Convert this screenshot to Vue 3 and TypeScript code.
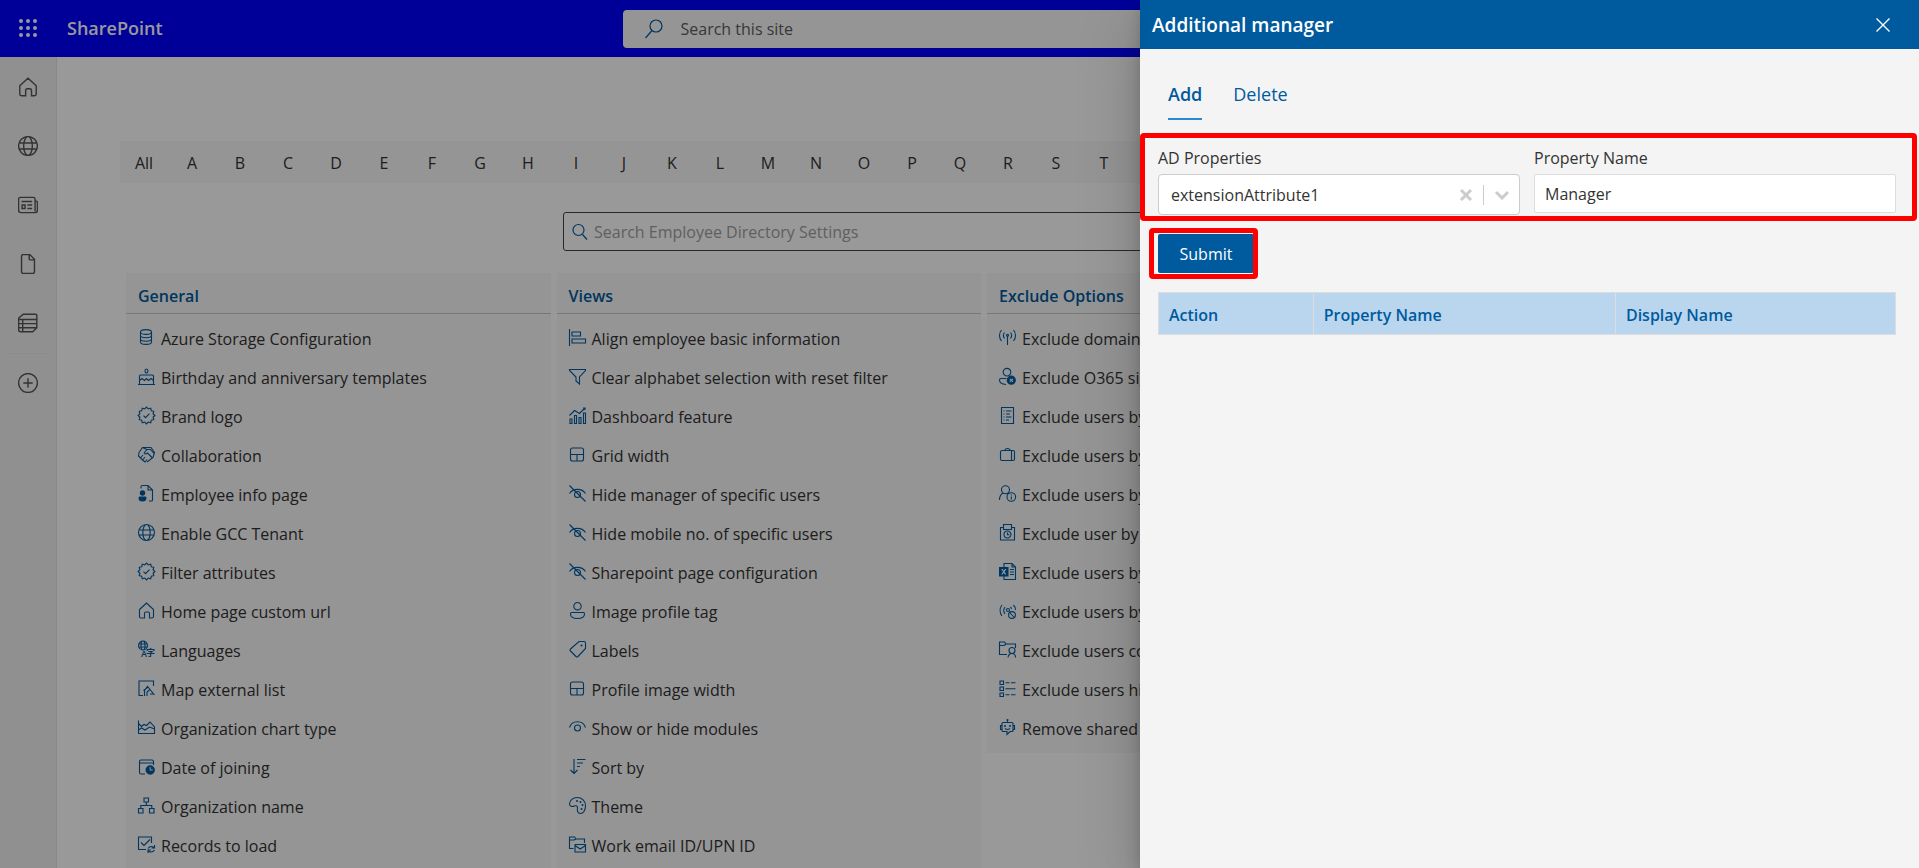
<script setup lang="ts">
import { ref } from 'vue'

interface Glyph {
  x: number
  y: number
  size: number
  text: string
}

interface Icon {
  stroke?: string
  fill?: string
  glyphs?: Glyph[]
}

interface Item {
  label: string
  icon: string
}

interface Section {
  title: string
  items: Item[]
}

/** Closed ellipse as path data. */
const oval = (x: number, y: number, rx: number, ry: number = rx): string =>
  `M${x - rx} ${y}a${rx} ${ry} 0 1 0 ${rx * 2} 0a${rx} ${ry} 0 1 0 ${-rx * 2} 0z`

/** Seal outline: twelve points with shallow valleys between them. */
const seal = (): string => {
  const points: string[] = []
  for (let i = 0; i < 24; i++) {
    const radius = i % 2 === 0 ? 8.4 : 6.8
    const a = (i / 24) * Math.PI * 2
    points.push(`${(8.5 + radius * Math.cos(a)).toFixed(2)} ${(8.5 + radius * Math.sin(a)).toFixed(2)}`)
  }
  return `M${points.join('L')}z`
}

const globe = oval(8.5, 8.5, 8) + oval(8.5, 8.5, 3.7, 8) + 'M1 6h15M1 11h15'
const home =
  'M1.5 7.5L8.5 1l7 6.5v7q0 1.5-1.5 1.5h-2.5v-4.5q0-1.5-1.5-1.5h-2q-1.5 0-1.5 1.5V16H3q-1.5 0-1.5-1.5z'

const icons: Record<string, Icon> = {
  database: {
    stroke:
      'M2.5 3v10c0 3.2 11 3.2 11 0V3M2.5 3c0-3.2 11-3.2 11 0s-11 3.2-11 0M2.5 6.5c0 3 11 3 11 0M2.5 10c0 3 11 3 11 0',
  },
  cake: {
    stroke:
      'M0 16.5h17M1.5 16.5V8q0-1 1-1h12q1 0 1 1v8.5M1.5 12.5l2.5-2 2.5 2 2-2 2 2 2.500-2 2.500 2' + oval(8.5, 3, 1.5, 2),
  },
  seal: { stroke: seal() + 'M5.5 8.7l2 2 4-4' },
  handshake: {
    stroke:
      'M1 6.5L4.5 1.5H13l3.5 5-1.5 5-6 4.5M6 7l3-3.5h3.5l3.5 4M6 7q1.5 2 3.5 0l5 5M1 6.5L.5 10l2 2L5 9M2.5 12l2 2 2.5-3M4.5 14L7 16l2-2.5M4.5 1.5L9 3.5',
  },
  employeePage: {
    stroke: 'M3 3.5V2Q3 .5 4.5.5H10L14.5 5v10q0 1-1 1H11M10 .5V5h4.5',
    fill: oval(4.5, 8, 2.7) + 'M1.5 11.5h6q1 0 1 1.5 0 3.5-4 3.5t-4-3.5q0-1.5 1-1.5z',
  },
  globe: { stroke: globe },
  home: { stroke: home },
  language: {
    stroke: oval(5, 4.5, 4.5) + oval(5, 4.5, 2, 4.5) + 'M.8 3h8.4M.8 6h8.4',
    glyphs: [
      { x: 3, y: 16, size: 9, text: 'A' },
      { x: 8, y: 15, size: 9, text: '字' },
    ],
  },
  map: { stroke: 'M15.5 6V1H1v14.5h4M6.5 16v-5.5l3-4 7 8.5M9 16v-4l2.5-2M12 14h4M5.5 10.5l4-3' },
  areaChart: { stroke: 'M.5 1.5v13h16V8L12 3 8.5 6.5l-2.5-1-2.5 2-3-3M.5 11l3-2L7 11l4.500-3 5 2' },
  dateClock: {
    stroke: 'M1.5 5h14V3.5Q15.5 2 14 2H3Q1.5 2 1.5 3.5v11Q1.5 16 3 16h4M15.5 5v2',
    fill: oval(12.2, 12, 4.7) + 'M11.7 9v3.5h3v-1h-2V9z',
  },
  orgChart: { stroke: 'M6 1h4.5v4H6zM.5 11.5H5V16H.5zM11.5 11.5H16V16h-4.5zM8.3 5v3.5M2.8 11.5v-3h11v3' },
  records: {
    stroke: 'M13.5 7V1H.5v12.5H8M3 6.5l3 3 6-6M10 12.5q2.5-3.5 6-1M16.5 9v3h-3M16.5 14q-2.5 3.5-6 1M10 17v-3h3',
  },
  alignLeft: { stroke: 'M.5 0v17M3 3h8.5v4H3zM3 10h13.5v4H3z' },
  funnel: { stroke: 'M.5 1.5h16v1L10.5 9v7L7 13V9L.5 2.5z' },
  dashboard: {
    stroke: 'M1 12h2v4.5H1zM5.5 8.500h2v8h-2zM10 10.5h2v6h-2zM14.5 6h2v10.5h-2zM.5 8.500l5-5 5 3L16 1M14 1h2v2',
  },
  layout: { stroke: 'M3.5 2h9q2 0 2 2v9q0 2-2 2h-9q-2 0-2-2V4q0-2 2-2zM1.5 8.500h13M8 8.500V15' },
  eyeOff: { stroke: 'M.5 8.500C4 3 13 3 16.5 8.500M.5.5l16 16' + oval(8.5, 9.5, 3) },
  person: { stroke: oval(8.5, 4.2, 3.7) + 'M2.5 10.5h12q1 0 1 1.5 0 4.5-7 4.5t-7-4.5q0-1.5 1-1.5z' },
  tag: { stroke: 'M10 .5h5q1.5 0 1.5 1.5v5.5L9 15.5q-1 1-2 0L1.5 10q-1-1 0-2z', fill: oval(12.5, 4.5, 1) },
  eye: { stroke: 'M.5 8.500C3 .8 14 .8 16.5 8.500' + oval(8.5, 9, 3) },
  sort: { stroke: 'M5 1v14.5M1.5 12L5 15.5 8.5 12M8 1.5h8.5M8 5h6M8 8.500h3' },
  palette: {
    stroke: 'M8 .5c5 0 8.500 3.500 8.500 8 0 4.500-2 8-5 8s-3.500-3-3-5.500c.3-2-1.500-2.500-3-2-2.500 1-5 .5-5-2C.5 3.5 4 .5 8 .5z',
    fill: oval(8, 4, 1) + oval(11.5, 5, 1) + oval(13.5, 8, 1) + oval(12.5, 12, 1),
  },
  folderMail: { stroke: 'M4.5 12.5h-4V1h5L7 3h8.5v4M.5 4H5l2-1M6 8.500h10.5V16H6zM6 9.5l5.200 3.500 5.300-3.500' },
  antenna: {
    stroke:
      'M8.5 7v9M5.5 9.5a5 5 0 0 1 0-6M11.5 3.5a5 5 0 0 1 0 6M2.5 12a8.500 8.500 0 0 1 0-11M14.5 1a8.500 8.500 0 0 1 0 11' +
      oval(8.5, 6.2, 1),
  },
  personRemove: {
    stroke: oval(8, 4.2, 3.8) + 'M7.5 10.5H2q-1.5 0-1.5 1.5 0 4 6.5 4.5',
    fill:
      oval(12.3, 12.2, 4.6) +
      'M10.500 11.200l.8-.8 1.100 1.100 1.100-1.100.8.8-1.100 1.100 1.100 1.100-.8.8-1.100-1.100-1.100 1.100-.8-.8 1.100-1.100z',
  },
  document: { stroke: 'M2.5.5h12v16h-12zM4.5 4h1M7 4h5.5M4.5 7h1M7 7h4M4.5 10h1M7 10h5.5M4.5 13h1M7 13h3' },
  briefcase: {
    stroke:
      'M3 4.5h11q1.5 0 1.5 1.5v7q0 1.5-1.5 1.5H3q-1.5 0-1.5-1.5V6q0-1.5 1.5-1.5zM6 4.5q0-2 2.500-2t2.500 2M12.5 4.5v10',
  },
  personInfo: { stroke: oval(6.5, 4.7, 4) + oval(12.3, 12, 4.3) + 'M.5 15q0-5 3.500-7M12.3 11.5v3M12.3 9.5v1' },
  badgeClock: { stroke: 'M4.5 3.5h-3V16h14V3.5h-3M4.5.5h8v5h-8z' + oval(8.5, 10.5, 3.5) + 'M8.5 8.500v2.300h2' },
  spreadsheet: {
    stroke: 'M5 4V.5h8L16.5 4v12.5H5V13M13 .5V4h3.5M11 6.5h4M11 9h4M11 11.5h4',
    fill: 'M0 4h9.5v9.5H0zM2.200 6l1.800 2.700-1.800 2.800h1.500l1.100-1.800 1.100 1.800h1.500L5.600 8.700 7.400 6H5.900L4.800 7.700 3.700 6z',
  },
  signalBlocked: {
    stroke:
      'M3 14a9 9 0 0 1 0-11M6 12a6 6 0 0 1 0-7M11.5 5q1 1 1 2M14.5 3q2 2 2 5M10.7 10.5l4.500 5' +
      oval(9, 8, 1.5) +
      oval(13, 13, 3.4),
  },
  folderPerson: { stroke: 'M8 13.5H.5V1h5L7 3h9.5v4M.5 4.5H5L7 3M9 16.5q.5-4 4-4t3.500 4' + oval(13, 9.5, 3) },
  checklist: {
    stroke:
      'M1 1h3.500v3.500H1zM1 7h3.500v3.500H1zM1 13h3.500v3.500H1zM6.5 2.700h4M12 2.700h4.500M6.5 8.700h10M6.5 14.700h4M12 14.700h4.500',
  },
  robot: {
    stroke:
      'M4 3.5h9q1 0 1 1v7q0 1-1 1h-2l-3 3v-3H4q-1 0-1-1v-7q0-1 1-1zM8.5 3.5V.5M3 6.5H1.5v4H3M14 6.5h1.500v4H14M6 9.5q2.500 2 5 0',
    fill: oval(6, 7, 1) + oval(11, 7, 1) + oval(8.5, 1, 1),
  },
  news: {
    stroke:
      'M2 2h11q1.5 0 1.5 1.5V14M14.5 5h.5q1.5 0 1.5 1.5V13q0 2-2 2h-12q-2 0-2-2V3.5Q.5 2 2 2M3 5.5h9M8 8.500h4M8 11.5h4M3.5 8.500H6v3H3.500z',
  },
  page: { stroke: 'M4.5.5H10l4 4V15q0 1.5-1.5 1.5h-8Q3 16.5 3 15V2Q3 .5 4.5.5M9.5.5V4q0 1 1 1H14' },
  lists: { stroke: 'M4.5 1H15q1 0 1 1v10.5L12.5 16h-10q-2 0-2-2V4.5zM.5 5.5H16M.5 9H16M.5 12.5H16M4 5.5V16' },
  add: { stroke: oval(8.5, 8.5, 8) + 'M8.5 4.5v8M4.5 8.500h8' },
}

const railLinks: Item[] = [
  { label: 'Home', icon: 'home' },
  { label: 'My sites', icon: 'globe' },
  { label: 'News', icon: 'news' },
  { label: 'Files', icon: 'page' },
  { label: 'Lists', icon: 'lists' },
]

const letters: string[] = ['All', ...'ABCDEFGHIJKLMNOPQRST']

const sections: Section[] = [
  {
    title: 'General',
    items: [
      { label: 'Azure Storage Configuration', icon: 'database' },
      { label: 'Birthday and anniversary templates', icon: 'cake' },
      { label: 'Brand logo', icon: 'seal' },
      { label: 'Collaboration', icon: 'handshake' },
      { label: 'Employee info page', icon: 'employeePage' },
      { label: 'Enable GCC Tenant', icon: 'globe' },
      { label: 'Filter attributes', icon: 'seal' },
      { label: 'Home page custom url', icon: 'home' },
      { label: 'Languages', icon: 'language' },
      { label: 'Map external list', icon: 'map' },
      { label: 'Organization chart type', icon: 'areaChart' },
      { label: 'Date of joining', icon: 'dateClock' },
      { label: 'Organization name', icon: 'orgChart' },
      { label: 'Records to load', icon: 'records' },
    ],
  },
  {
    title: 'Views',
    items: [
      { label: 'Align employee basic information', icon: 'alignLeft' },
      { label: 'Clear alphabet selection with reset filter', icon: 'funnel' },
      { label: 'Dashboard feature', icon: 'dashboard' },
      { label: 'Grid width', icon: 'layout' },
      { label: 'Hide manager of specific users', icon: 'eyeOff' },
      { label: 'Hide mobile no. of specific users', icon: 'eyeOff' },
      { label: 'Sharepoint page configuration', icon: 'eyeOff' },
      { label: 'Image profile tag', icon: 'person' },
      { label: 'Labels', icon: 'tag' },
      { label: 'Profile image width', icon: 'layout' },
      { label: 'Show or hide modules', icon: 'eye' },
      { label: 'Sort by', icon: 'sort' },
      { label: 'Theme', icon: 'palette' },
      { label: 'Work email ID/UPN ID', icon: 'folderMail' },
    ],
  },
  {
    title: 'Exclude Options',
    items: [
      { label: 'Exclude domain', icon: 'antenna' },
      { label: 'Exclude O365 sign', icon: 'personRemove' },
      { label: 'Exclude users by', icon: 'document' },
      { label: 'Exclude users by', icon: 'briefcase' },
      { label: 'Exclude users by', icon: 'personInfo' },
      { label: 'Exclude user by', icon: 'badgeClock' },
      { label: 'Exclude users by', icon: 'spreadsheet' },
      { label: 'Exclude users by', icon: 'signalBlocked' },
      { label: 'Exclude users con', icon: 'folderPerson' },
      { label: 'Exclude users hid', icon: 'checklist' },
      { label: 'Remove shared', icon: 'robot' },
    ],
  },
]

const dots = [0, 1, 2].flatMap((row) => [0, 1, 2].map((col) => ({ x: 2 + col * 7, y: 2 + row * 7 })))

const activeTab = ref<'Add' | 'Delete'>('Add')
const adProperty = ref('extensionAttribute1')
const propertyName = ref('Manager')
</script>

<template>
  <div class="app">
    <header class="suite-bar">
      <div class="brand">
        <button class="waffle" type="button" aria-label="App launcher">
          <svg width="18" height="18" viewBox="0 0 18 18" aria-hidden="true">
            <circle v-for="(dot, i) in dots" :key="i" :cx="dot.x" :cy="dot.y" r="2" />
          </svg>
        </button>
        <a class="brand-name" href="#">SharePoint</a>
      </div>
      <label class="site-search">
        <svg width="18" height="20" viewBox="0 0 18 20" aria-hidden="true">
          <circle cx="11" cy="7" r="6" />
          <path d="M7 11.5L.5 19" />
        </svg>
        <input type="search" placeholder="Search this site" aria-label="Search this site" />
      </label>
    </header>

    <div class="workspace">
      <nav class="rail" aria-label="SharePoint">
        <a v-for="link in railLinks" :key="link.label" class="rail-link" href="#" :aria-label="link.label">
          <svg class="rail-icon" viewBox="0 0 17 17" aria-hidden="true">
            <path :d="icons[link.icon].stroke" />
          </svg>
        </a>
        <button class="rail-link rail-create" type="button" aria-label="Create">
          <svg class="rail-icon" viewBox="0 0 17 17" aria-hidden="true">
            <path :d="icons.add.stroke" />
          </svg>
        </button>
      </nav>

      <main class="content">
        <div class="alphabet">
          <button v-for="letter in letters" :key="letter" class="letter" type="button">{{ letter }}</button>
        </div>

        <label class="settings-search">
          <svg width="16" height="18" viewBox="0 0 16 18" aria-hidden="true">
            <circle cx="6.5" cy="7" r="5.5" />
            <path d="M10.5 11.5L15 16.5" />
          </svg>
          <input
            type="search"
            placeholder="Search Employee Directory Settings"
            aria-label="Search Employee Directory Settings"
          />
        </label>

        <div class="sections">
          <section v-for="section in sections" :key="section.title" class="section">
            <h2 class="section-title">{{ section.title }}</h2>
            <ul class="items">
              <li v-for="(item, i) in section.items" :key="i">
                <a class="item" href="#">
                  <svg class="item-icon" viewBox="0 0 17 17" aria-hidden="true">
                    <path v-if="icons[item.icon].stroke" class="line" :d="icons[item.icon].stroke" />
                    <path v-if="icons[item.icon].fill" class="solid" :d="icons[item.icon].fill" />
                    <text
                      v-for="glyph in icons[item.icon].glyphs ?? []"
                      :key="glyph.text"
                      :x="glyph.x"
                      :y="glyph.y"
                      :font-size="glyph.size"
                    >{{ glyph.text }}</text>
                  </svg>
                  <span>{{ item.label }}</span>
                </a>
              </li>
            </ul>
          </section>
        </div>
      </main>
    </div>

    <div class="overlay">
      <aside class="drawer" role="dialog" aria-labelledby="drawer-title">
        <div class="drawer-head">
          <h1 id="drawer-title">Additional manager</h1>
          <button class="close" type="button" aria-label="Close">
            <svg width="14" height="14" viewBox="0 0 14 14" aria-hidden="true">
              <path d="M.5.5l13 13M13.5.5l-13 13" />
            </svg>
          </button>
        </div>

        <div class="tabs" role="tablist">
          <button
            v-for="tab in (['Add', 'Delete'] as const)"
            :key="tab"
            class="tab"
            :class="{ active: activeTab === tab }"
            type="button"
            role="tab"
            :aria-selected="activeTab === tab"
            @click="activeTab = tab"
          >{{ tab }}</button>
        </div>

        <form class="form" @submit.prevent>
          <div class="fields highlighted">
            <div class="field">
              <label for="ad-property">AD Properties</label>
              <div class="picker">
                <select id="ad-property" v-model="adProperty">
                  <option value="" />
                  <option value="extensionAttribute1">extensionAttribute1</option>
                </select>
                <div class="picker-tools">
                  <button class="clear" type="button" aria-label="Clear" @click="adProperty = ''">
                    <svg width="14" height="14" viewBox="0 0 14 14" aria-hidden="true">
                      <path d="M2 2l10 10M12 2L2 12" />
                    </svg>
                  </button>
                  <svg class="chevron" width="16" height="10" viewBox="0 0 16 10" aria-hidden="true">
                    <path d="M2 2l6 6 6-6" />
                  </svg>
                </div>
              </div>
            </div>
            <div class="field">
              <label for="property-name">Property Name</label>
              <input id="property-name" v-model="propertyName" class="text-box" type="text" />
            </div>
          </div>

          <div class="submit-wrap highlighted">
            <button class="submit" type="submit">Submit</button>
          </div>
        </form>

        <table class="grid">
          <thead>
            <tr>
              <th class="col-action" scope="col">Action</th>
              <th class="col-property" scope="col">Property Name</th>
              <th scope="col">Display Name</th>
            </tr>
          </thead>
        </table>
      </aside>
    </div>
  </div>
</template>

<style>
body {
  margin: 0;
}
</style>

<style scoped>
.app,
.app * {
  box-sizing: border-box;
}

.app {
  position: relative;
  display: flex;
  flex-direction: column;
  height: 100vh;
  overflow: hidden;
  background: #fff;
  color: #333;
  font: 16px/22px 'Segoe UI', 'Open Sans', 'Noto Sans', 'Noto Sans CJK SC', sans-serif;
}

button,
input,
select {
  margin: 0;
  padding: 0;
  border: 0;
  background: none;
  color: inherit;
  font: inherit;
}

a {
  color: inherit;
  text-decoration: none;
}

svg {
  flex: none;
  fill: none;
}

/* Suite bar */
.suite-bar {
  display: grid;
  grid-template-columns: 1fr minmax(0, 674px) 1fr;
  flex: none;
  align-items: center;
  height: 57px;
  background: #00f;
}

.brand {
  display: flex;
  align-items: center;
  gap: 30px;
  padding: 0 0 2px 19px;
}

.waffle {
  display: flex;
}

.waffle svg {
  fill: #fff;
}

.brand-name {
  color: #fff;
  font-size: 18px;
  font-weight: 600;
}

.site-search {
  display: flex;
  align-items: center;
  gap: 18px;
  height: 38px;
  padding: 0 22px;
  border-radius: 4px;
  background: #f8f8f8;
}

.site-search svg,
.settings-search svg {
  stroke: #005a9e;
  stroke-width: 1.2;
}

.site-search input,
.settings-search input {
  flex: 1;
  min-width: 0;
  outline: 0;
}

.site-search input::placeholder {
  color: #605e5c;
  opacity: 1;
}

/* Left rail */
.workspace {
  display: flex;
  flex: 1;
  min-height: 0;
}

.rail {
  display: flex;
  flex: none;
  flex-direction: column;
  width: 57px;
  border-right: 1px solid #e4e4e4;
  background: #f0f0f0;
}

.rail-link {
  display: flex;
  align-items: center;
  justify-content: center;
  height: 59px;
}

.rail-create {
  margin: 1px 5px 0;
  border-top: 1px solid #eaeaea;
}

.rail-icon {
  width: 20px;
  height: 20px;
  stroke: #555;
  stroke-width: 1.2;
}

/* Settings page */
.content {
  flex: 1;
  min-width: 0;
  padding: 84px 71px 0 63px;
}

.alphabet {
  display: flex;
  height: 42px;
  background: #f8f8f8;
}

.letter {
  flex: none;
  width: 48px;
  padding-top: 2px;
}

.settings-search {
  display: flex;
  align-items: center;
  gap: 6px;
  max-width: 842px;
  height: 39px;
  margin: 29px auto 0;
  padding: 0 8px;
  border: 1px solid #444;
  border-radius: 3px;
}

.settings-search input::placeholder {
  color: #a0a0a0;
  opacity: 1;
}

.sections {
  display: grid;
  grid-template-columns: repeat(4, minmax(0, 1fr));
  align-items: start;
  gap: 6px;
  margin-top: 22px;
  padding: 0 6px;
}

.section {
  padding-bottom: 5px;
  background: #f8f8f8;
}

.section-title {
  height: 41px;
  margin: 0;
  padding: 12px 12px 0;
  border-bottom: 1px solid #c8c8c8;
  color: #005a9e;
  font-size: 16px;
  font-weight: 600;
}

.items {
  margin: 0;
  padding: 5px 0 0;
  list-style: none;
}

.item {
  display: flex;
  align-items: center;
  gap: 6px;
  height: 39px;
  padding: 0 12px;
  white-space: nowrap;
}

.item-icon {
  width: 17px;
  height: 17px;
  margin-bottom: 2px;
  overflow: visible;
}

.item-icon .line {
  stroke: #005a9e;
  stroke-width: 1.1;
}

.item-icon .solid,
.item-icon text {
  fill: #005a9e;
  fill-rule: evenodd;
}

.item-icon text {
  font-weight: 600;
}

/* Drawer */
.overlay {
  position: absolute;
  inset: 0;
  display: flex;
  justify-content: flex-end;
  background: rgba(0, 0, 0, 0.4);
}

.drawer {
  width: 779px;
  max-width: 100%;
  background: #f4f4f4;
  box-shadow: 0 26px 58px rgba(0, 0, 0, 0.22), 0 5px 14px rgba(0, 0, 0, 0.18);
}

.drawer-head {
  display: flex;
  align-items: center;
  justify-content: space-between;
  height: 49px;
  padding: 1px 29px 0 12px;
  background: #005a9e;
  color: #fff;
}

.drawer-head h1 {
  margin: 0;
  font-size: 19px;
  font-weight: 600;
}

.close {
  display: flex;
}

.close svg {
  stroke: #fff;
  stroke-width: 1.4;
}

.tabs {
  display: flex;
  gap: 31px;
  height: 84px;
  padding: 20px 28px 13px;
}

.tab {
  border-bottom: 2px solid transparent;
  color: #005a9e;
  font-size: 18px;
}

.tab.active {
  border-color: #2b88d8;
  font-weight: 600;
}

/* Red frames laid over the parts that a reader should look at */
.highlighted {
  position: relative;
}

.highlighted::after {
  position: absolute;
  border: 5px solid #f00;
  border-radius: 4px;
  content: '';
  pointer-events: none;
}

.fields {
  display: grid;
  grid-template-columns: 1fr 1fr;
  align-items: start;
  gap: 14px;
  padding: 14px 23px 6px 18px;
}

.fields::after {
  inset: 0 2px 0 0;
}

.field {
  display: flex;
  flex-direction: column;
  gap: 5px;
}

.picker {
  display: grid;
  align-items: center;
}

.picker select,
.picker-tools {
  grid-area: 1 / 1;
}

.picker select {
  width: 100%;
  height: 41px;
  padding: 0 80px 0 12px;
  border: 1px solid #ccc;
  border-radius: 4px;
  appearance: none;
  background: #fff;
}

.picker-tools {
  display: flex;
  align-items: center;
  justify-self: end;
  padding-right: 10px;
  pointer-events: none;
}

.clear {
  display: flex;
  padding: 3px 10px 3px 0;
  border-right: 1px solid #ccc;
  pointer-events: auto;
}

.chevron {
  margin-left: 10px;
}

.clear svg,
.chevron {
  stroke: #ccc;
  stroke-width: 3;
}

.text-box {
  width: 100%;
  height: 39px;
  padding: 0 10px;
  border: 1px solid #ddd;
  border-radius: 2px;
  background: #fff;
}

.submit-wrap {
  width: fit-content;
  margin: 13px 0 0 18px;
}

.submit-wrap::after {
  inset: -6px -4px -6px -9px;
}

.submit {
  display: block;
  width: 96px;
  height: 39px;
  border-radius: 2px;
  background: #005a9e;
  color: #fff;
}

.grid {
  width: calc(100% - 41px);
  margin: 19px 23px 0 18px;
  border-collapse: collapse;
  table-layout: fixed;
}

.grid th {
  height: 42px;
  padding: 3px 10px 0;
  border: 1px solid #ddd;
  background: #b9d6ee;
  color: #005a9e;
  font-weight: 600;
  text-align: left;
}

.col-action {
  width: 21%;
}

.col-property {
  width: 41%;
}
</style>
